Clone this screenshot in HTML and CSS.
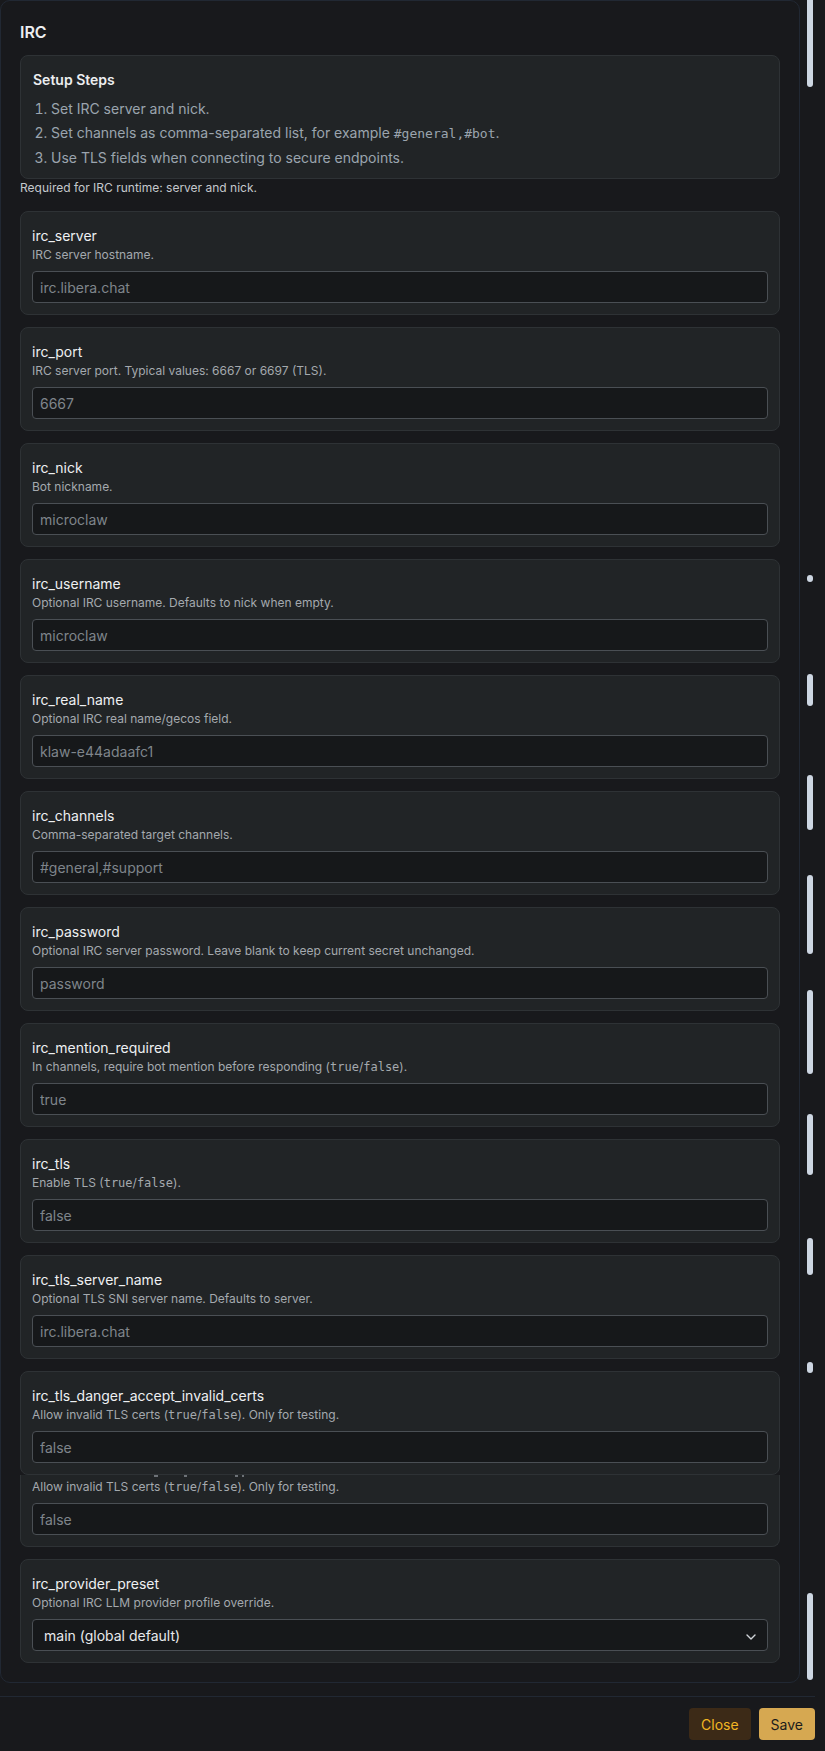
FILE: index.html
```html
<!DOCTYPE html>
<html lang="en">
<head>
    <meta charset="UTF-8">
    <meta name="viewport" content="width=device-width, initial-scale=1.0">
    <title>IRC Channel Settings</title>
    <link rel="stylesheet" href="styles.css">
</head>
<body>
    <div class="modal">
        <div class="modal-body">
            <section class="channel-section">
                <h2 class="section-title">IRC</h2>

                <div class="setup-box">
                    <div class="setup-title">Setup Steps</div>
                    <ol class="setup-list">
                        <li>Set IRC server and nick.</li>
                        <li>Set channels as comma-separated list, for example <code>#general,#bot</code>.</li>
                        <li>Use TLS fields when connecting to secure endpoints.</li>
                    </ol>
                </div>
                <p class="required-note">Required for IRC runtime: server and nick.</p>

                <div class="field-list">
                    <div class="field-card">
                        <div class="field-label">irc_server</div>
                        <div class="field-desc">IRC server hostname.</div>
                        <input class="field-input" type="text" placeholder="irc.libera.chat">
                    </div>

                    <div class="field-card">
                        <div class="field-label">irc_port</div>
                        <div class="field-desc">IRC server port. Typical values: 6667 or 6697 (TLS).</div>
                        <input class="field-input" type="text" placeholder="6667">
                    </div>

                    <div class="field-card">
                        <div class="field-label">irc_nick</div>
                        <div class="field-desc">Bot nickname.</div>
                        <input class="field-input" type="text" placeholder="microclaw">
                    </div>

                    <div class="field-card">
                        <div class="field-label">irc_username</div>
                        <div class="field-desc">Optional IRC username. Defaults to nick when empty.</div>
                        <input class="field-input" type="text" placeholder="microclaw">
                    </div>

                    <div class="field-card">
                        <div class="field-label">irc_real_name</div>
                        <div class="field-desc">Optional IRC real name/gecos field.</div>
                        <input class="field-input" type="text" placeholder="klaw-e44adaafc1">
                    </div>

                    <div class="field-card">
                        <div class="field-label">irc_channels</div>
                        <div class="field-desc">Comma-separated target channels.</div>
                        <input class="field-input" type="text" placeholder="#general,#support">
                    </div>

                    <div class="field-card">
                        <div class="field-label">irc_password</div>
                        <div class="field-desc">Optional IRC server password. Leave blank to keep current secret unchanged.</div>
                        <input class="field-input" type="password" placeholder="password">
                    </div>

                    <div class="field-card">
                        <div class="field-label">irc_mention_required</div>
                        <div class="field-desc">In channels, require bot mention before responding (<code>true</code>/<code>false</code>).</div>
                        <input class="field-input" type="text" placeholder="true">
                    </div>

                    <div class="field-card">
                        <div class="field-label">irc_tls</div>
                        <div class="field-desc">Enable TLS (<code>true</code>/<code>false</code>).</div>
                        <input class="field-input" type="text" placeholder="false">
                    </div>

                    <div class="field-card">
                        <div class="field-label">irc_tls_server_name</div>
                        <div class="field-desc">Optional TLS SNI server name. Defaults to server.</div>
                        <input class="field-input" type="text" placeholder="irc.libera.chat">
                    </div>

                    <div class="field-card">
                        <div class="field-label">irc_tls_danger_accept_invalid_certs</div>
                        <div class="field-desc">Allow invalid TLS certs (<code>true</code>/<code>false</code>). Only for testing.</div>
                        <input class="field-input" type="text" placeholder="false">
                    </div>

                    <!-- repaint ghost of the card above, its top is cut off -->
                    <div class="field-card ghost">
                        <div class="ghost-marks">
                            <span class="mark m1"></span>
                            <span class="mark m2"></span>
                            <span class="mark m3"></span>
                            <span class="mark m4"></span>
                        </div>
                        <div class="field-desc">Allow invalid TLS certs (<code>true</code>/<code>false</code>). Only for testing.</div>
                        <input class="field-input" type="text" placeholder="false">
                    </div>

                    <div class="field-card">
                        <div class="field-label">irc_provider_preset</div>
                        <div class="field-desc">Optional IRC LLM provider profile override.</div>
                        <div class="select-wrap">
                            <select class="field-select">
                                <option>main (global default)</option>
                            </select>
                            <svg class="select-chevron" width="10" height="6" viewBox="0 0 10 6">
                                <path d="M1 1l4 4 4-4" fill="none" stroke="#d0d4d9" stroke-width="1.4" stroke-linecap="round" stroke-linejoin="round"/>
                            </svg>
                        </div>
                    </div>
                </div>
            </section>

            <div class="scroll-gutter">
                <span class="thumb s1"></span>
                <span class="thumb s2"></span>
                <span class="thumb s3"></span>
                <span class="thumb s4"></span>
                <span class="thumb s5"></span>
                <span class="thumb s6"></span>
                <span class="thumb s7"></span>
                <span class="thumb s8"></span>
                <span class="thumb s9"></span>
                <span class="thumb s10"></span>
            </div>
        </div>

        <div class="modal-footer">
            <button class="btn btn-close">Close</button>
            <button class="btn btn-save">Save</button>
        </div>
    </div>
</body>
</html>
```

FILE: styles.css
```css
:root {
    --page-bg: #18191c;
    --section-border: #212833;
    --card-bg: #212426;
    --card-border: #2e3235;
    --input-bg: #16181a;
    --input-border: #4a4f54;
    --text-main: #eceef0;
    --text-label: #eef0f2;
    --text-muted: #a4a9ae;
    --text-steps: #9ba4ae;
    --placeholder: #7f858b;
    --accent: #f2b623;
}

* {
    box-sizing: border-box;
}

body {
    margin: 0;
    background: var(--page-bg);
    color: var(--text-main);
    font-family: Inter, "Noto Sans", sans-serif;
}

code {
    font-family: "DejaVu Sans Mono", "Liberation Mono", monospace;
    font-size: 12px;
}

.modal {
    width: 815px;
}

.modal-body {
    display: flex;
}

.channel-section {
    width: 800px;
    flex-shrink: 0;
    border: 1px solid var(--section-border);
    border-radius: 10px;
    padding: 19px;
}

.section-title {
    margin: 0 0 11px;
    font-size: 16px;
    line-height: 24px;
    font-weight: 600;
}

.setup-box {
    background: var(--card-bg);
    border: 1px solid var(--card-border);
    border-radius: 8px;
    padding: 14px 12px 8px;
}

.setup-title {
    font-size: 14px;
    line-height: 20px;
    font-weight: 600;
}

.setup-list {
    margin: 7px 0 0;
    padding-left: 18px;
    color: var(--text-steps);
    font-size: 14px;
    line-height: 24px;
}

.setup-list code {
    font-size: 13px;
}

.required-note {
    margin: 0 0 14px;
    font-size: 12px;
    line-height: 18px;
    color: #c4c8cc;
}

.field-list {
    display: flex;
    flex-direction: column;
    gap: 12px;
}

.field-card {
    background: var(--card-bg);
    border: 1px solid var(--card-border);
    border-radius: 8px;
    padding: 14px 11px 11px;
}

.field-label {
    font-size: 14px;
    line-height: 20px;
    font-weight: 400;
    color: var(--text-label);
}

.field-desc {
    font-size: 12px;
    line-height: 18px;
    color: var(--text-muted);
}

.field-input,
.field-select {
    display: block;
    width: 100%;
    height: 32px;
    margin-top: 7px;
    background: var(--input-bg);
    border: 1px solid var(--input-border);
    border-radius: 4px;
    padding: 0 7px;
    font-family: inherit;
    font-size: 14px;
    color: var(--text-main);
    outline: none;
}

.field-input::placeholder {
    color: var(--placeholder);
}

/* the repeated card below the danger field, top part hidden */
.field-card.ghost {
    margin-top: -12px;
    border-top: none;
    border-radius: 0 0 8px 8px;
    padding-top: 0;
}

.ghost-marks {
    height: 3px;
    display: flex;
    align-items: flex-start;
}

.mark {
    display: block;
    height: 2px;
    background: #6d7277;
}

.m1 { width: 4px; margin-left: 122px; }
.m2 { width: 3px; margin-left: 26px; }
.m3 { width: 3px; margin-left: 48px; }
.m4 { width: 2px; margin-left: 4px; }

.select-wrap {
    position: relative;
}

.field-select {
    appearance: none;
    -webkit-appearance: none;
    padding: 0 30px 0 11px;
    color: #e8eaec;
}

.select-chevron {
    position: absolute;
    right: 12px;
    top: 15px;
}

.scroll-gutter {
    width: 15px;
    padding-left: 7px;
    display: flex;
    flex-direction: column;
}

.thumb {
    display: block;
    width: 6px;
    background: #cdd6e2;
    border-radius: 3px;
}

.s1 { margin-top: 0; height: 87px; border-radius: 0 0 3px 3px; }
.s2 { margin-top: 488px; height: 7px; }
.s3 { margin-top: 92px; height: 32px; }
.s4 { margin-top: 69px; height: 55px; }
.s5 { margin-top: 45px; height: 79px; }
.s6 { margin-top: 36px; height: 84px; }
.s7 { margin-top: 40px; height: 61px; }
.s8 { margin-top: 63px; height: 37px; }
.s9 { margin-top: 87px; height: 11px; }
.s10 { margin-top: 220px; height: 87px; }

.modal-footer {
    margin-top: 13px;
    border-top: 1px solid var(--section-border);
    padding: 11px 0 10px;
    display: flex;
    justify-content: flex-end;
    gap: 8px;
}

.btn {
    height: 32px;
    padding: 0 12px;
    border: none;
    border-radius: 4px;
    font-family: inherit;
    font-size: 14px;
    cursor: pointer;
}

.btn-close {
    background: #3c2a17;
    color: var(--accent);
}

.btn-save {
    background: #d6a851;
    color: #1c1c1c;
}
```
